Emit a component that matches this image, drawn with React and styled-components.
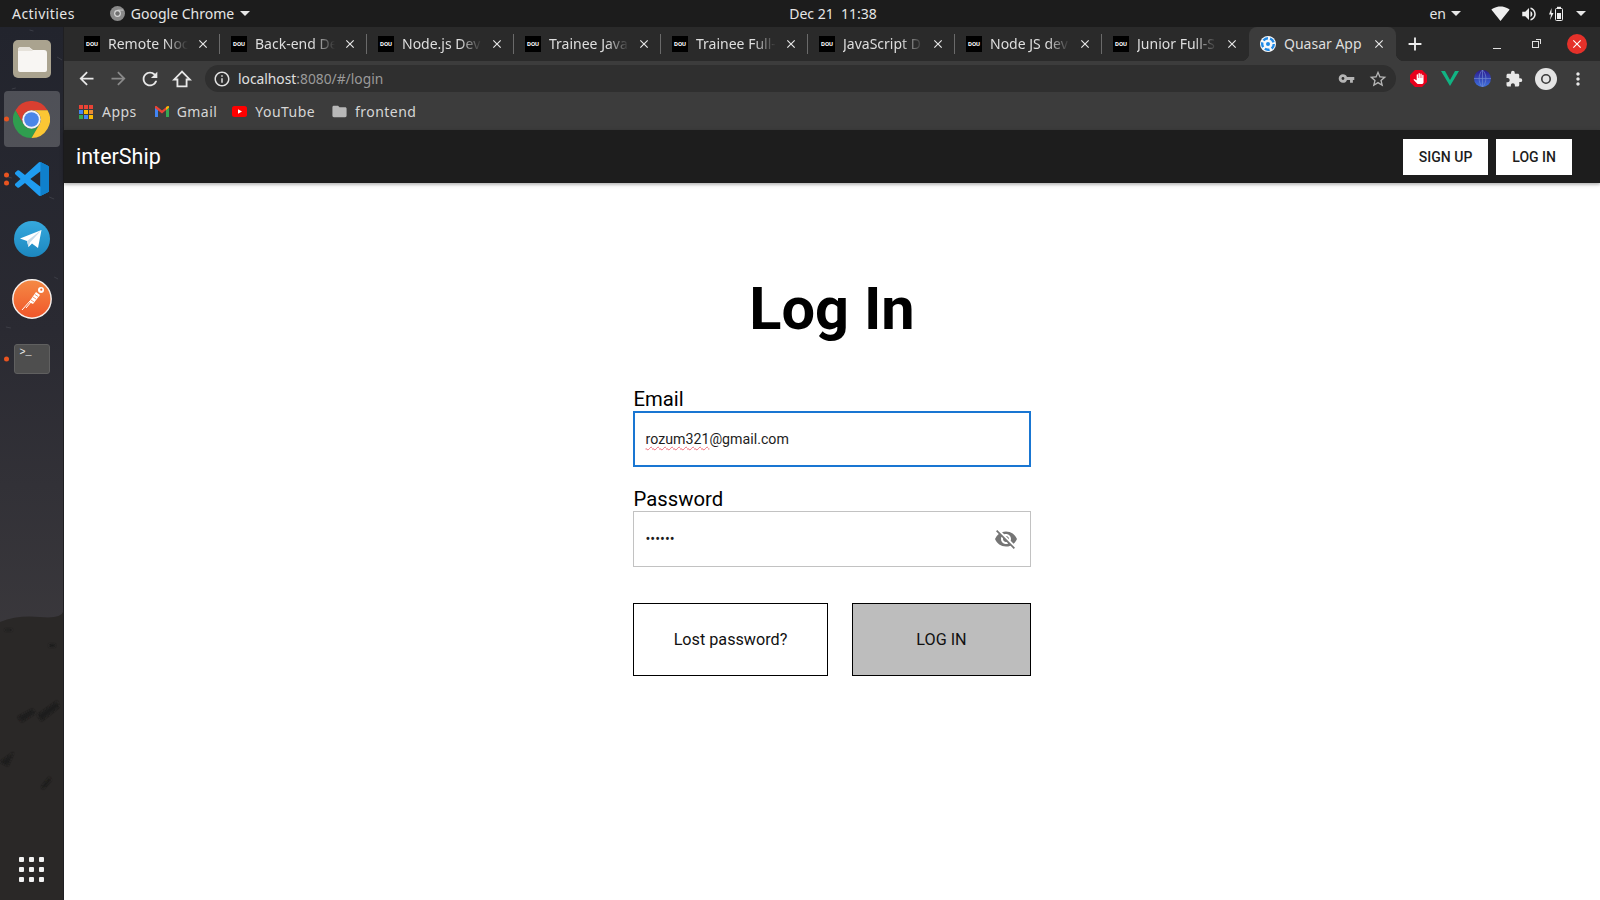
import React from 'react';
import styled, { createGlobalStyle } from 'styled-components';
import {
  MdArrowBack,
  MdArrowForward,
  MdRefresh,
  MdInfoOutline,
  MdVpnKey,
  MdStarBorder,
  MdExtension,
  MdMoreVert,
  MdFolder,
  MdClose,
  MdAdd,
  MdSignalWifi4Bar,
  MdVolumeUp,
  MdVisibilityOff,
  MdPanTool,
} from 'react-icons/md';

const uiFont = '"Noto Sans", "Open Sans", sans-serif';
const appFont = 'Roboto, "Liberation Sans", sans-serif';

const GlobalStyle = createGlobalStyle`
  html, body {
    margin: 0;
    height: 100%;
    overflow: hidden;
    background: #fff;
  }
  #root {
    height: 100%;
  }
`;

const Screen = styled.div`
  width: 1600px;
  height: 900px;
  display: flex;
  flex-direction: column;
  overflow: hidden;
`;

/* gnome top bar */
const TopBar = styled.header`
  flex: 0 0 27px;
  display: flex;
  align-items: center;
  background: #1c1c1c;
  color: #e6e6e6;
  font: 14px ${uiFont};
`;

const TopLeft = styled.div`
  flex: 0 0 789px;
  display: flex;
  align-items: center;
  padding-left: 12px;
  box-sizing: border-box;
`;

const Activities = styled.span`
  letter-spacing: 0.45px;
`;

const ActiveApp = styled.div`
  display: flex;
  align-items: center;
  gap: 6px;
  margin-left: 35px;
`;

const Caret = styled.span`
  width: 0;
  height: 0;
  border-left: 5px solid transparent;
  border-right: 5px solid transparent;
  border-top: 5px solid #e6e6e6;
`;

const Clock = styled.div`
  width: 88px;
  white-space: pre;
  text-align: center;
`;

const TopRight = styled.div`
  margin-left: auto;
  display: flex;
  align-items: center;
  padding-right: 14px;
  font-size: 14px;
  svg {
    display: block;
  }
`;

const Lang = styled.div`
  display: flex;
  align-items: center;
  gap: 5px;
  margin-right: 30px;
`;

const Tray = styled.div`
  display: flex;
  align-items: center;
  gap: 10px;
  margin-right: 12px;
  color: #eee;
`;

const Desktop = styled.div`
  flex: 1;
  display: flex;
  min-height: 0;
`;

/* ubuntu dock */
const Dock = styled.nav`
  position: relative;
  flex: 0 0 64px;
  display: flex;
  flex-direction: column;
  align-items: center;
  padding: 2px 0 18px;
  box-sizing: border-box;
  border-right: 1px solid #1f1f22;
  overflow: hidden;
`;

const Wallpaper = styled.svg`
  position: absolute;
  inset: 0;
  width: 100%;
  height: 100%;
`;

const DockSlot = styled.div`
  position: relative;
  width: 56px;
  height: 60px;
  display: flex;
  align-items: center;
  justify-content: center;
  &::before {
    content: '';
    position: absolute;
    inset: 2px 0;
    border-radius: 4px;
    background: ${(p) => (p.$active ? 'rgba(255,255,255,.2)' : 'transparent')};
  }
  > svg,
  > div {
    position: relative;
  }
`;

const RunDots = styled.div`
  position: absolute !important;
  left: 0;
  top: 50%;
  transform: translate(0, -50%);
  display: flex;
  flex-direction: column;
  gap: 3px;
`;

const RunDot = styled.span`
  width: 5px;
  height: 5px;
  border-radius: 50%;
  background: #e95420;
`;

const ShowApps = styled.div`
  position: relative;
  margin-top: auto;
  display: grid;
  grid-template-columns: repeat(3, 5px);
  gap: 5px;
`;

const ShowAppsDot = styled.span`
  width: 5px;
  height: 5px;
  border-radius: 1px;
  background: #f1f1f1;
`;

const TerminalIcon = styled.div`
  width: 36px;
  height: 30px;
  box-sizing: border-box;
  padding: 2px 0 0 5px;
  border-radius: 3px;
  background: #4e4e4e;
  border: 1px solid #606060;
  color: #eee;
  font: 10px/12px "Liberation Mono", monospace;
`;

/* browser window */
const Browser = styled.div`
  flex: 1;
  min-width: 0;
  display: flex;
  flex-direction: column;
`;

const TabStrip = styled.div`
  flex: 0 0 34px;
  display: flex;
  align-items: stretch;
  padding-left: 9px;
  background: #2a2a2a;
  color: #dedede;
  font: 14px ${uiFont};
`;

const Tab = styled.div`
  position: relative;
  flex: 0 0 147px;
  min-width: 0;
  display: flex;
  align-items: center;
  gap: 8px;
  padding: 0 10px 1px 11px;
  box-sizing: border-box;
  border-radius: 8px 8px 0 0;
  background: ${(p) => (p.$active ? '#3c3c3c' : 'transparent')};

  ${(p) =>
    p.$divider &&
    `&::after {
      content: '';
      position: absolute;
      right: 0;
      top: 7px;
      height: 20px;
      width: 1px;
      background: #6a6a6a;
    }`}

  ${(p) =>
    p.$active &&
    `&::before {
      content: '';
      position: absolute;
      left: -8px;
      right: -8px;
      bottom: 0;
      height: 8px;
      z-index: 0;
      background:
        radial-gradient(circle at 0 0, transparent 8px, #3c3c3c 8.5px) left bottom / 8px 8px no-repeat,
        radial-gradient(circle at 100% 0, transparent 8px, #3c3c3c 8.5px) right bottom / 8px 8px no-repeat;
    }`}
`;

const DouIcon = styled.span`
  flex: 0 0 16px;
  height: 16px;
  background: #000;
  color: #fff;
  font: 700 6px/16px ${appFont};
  text-align: center;
`;

const TabTitle = styled.span`
  position: relative;
  flex: 1;
  min-width: 0;
  overflow: hidden;
  white-space: nowrap;
  -webkit-mask-image: ${(p) =>
    p.$fade ? 'linear-gradient(to right, #000 72%, transparent 100%)' : 'none'};
`;

const TabClose = styled(MdClose)`
  position: relative;
  flex: 0 0 14px;
  width: 14px;
  height: 14px;
  color: #e8e8e8;
`;

const WindowControls = styled.div`
  flex: 1;
  display: flex;
  align-items: center;
  color: #eee;
`;

const NewTab = styled(MdAdd)`
  width: 22px;
  height: 22px;
  margin-left: 8px;
`;

const Minimize = styled.span`
  width: 8px;
  height: 1px;
  margin: 9px 0 0 67px;
  background: #e0e0e0;
`;

const Restore = styled.span`
  position: relative;
  width: 5px;
  height: 5px;
  margin: 1px 0 0 31px;
  border: 1px solid #e0e0e0;
  &::after {
    content: '';
    position: absolute;
    top: -3px;
    right: -3px;
    width: 4px;
    height: 4px;
    border-top: 1px solid #e0e0e0;
    border-right: 1px solid #e0e0e0;
  }
`;

const CloseWindow = styled.span`
  width: 20px;
  height: 20px;
  margin-left: 28px;
  border-radius: 50%;
  background: #e5312a;
  display: flex;
  align-items: center;
  justify-content: center;
  color: #fff;
`;

const Toolbar = styled.div`
  flex: 0 0 35px;
  display: flex;
  align-items: flex-start;
  padding: 4px 6px 0;
  box-sizing: border-box;
  background: #3c3c3c;
`;

const IconSlot = styled.span`
  flex: 0 0 32px;
  height: 27px;
  display: flex;
  align-items: center;
  justify-content: center;
  color: ${(p) => p.$color || '#e8e8e8'};
  svg {
    display: block;
  }
`;

const Omnibox = styled.div`
  flex: 1;
  height: 27px;
  margin: 0 6px 0 7px;
  padding: 0 2px 0 8px;
  display: flex;
  align-items: center;
  border-radius: 14px;
  background: #2f2f2f;
  color: #e0e0e0;
  font: 13.8px ${uiFont};
`;

const UrlText = styled.div`
  flex: 1;
  margin-left: 7px;
  span {
    color: #9a9a9a;
  }
`;

const Bookmarks = styled.div`
  flex: 0 0 34px;
  display: flex;
  align-items: center;
  gap: 17px;
  padding: 0 0 3px 15px;
  box-sizing: border-box;
  background: #3c3c3c;
  color: #d6d6d6;
  font: 14px ${uiFont};
  letter-spacing: 0.45px;
`;

const Bookmark = styled.div`
  display: flex;
  align-items: center;
  gap: ${(p) => p.$gap || 8}px;
  margin-right: ${(p) => p.$after || 0}px;
  svg {
    display: block;
  }
`;

const FolderGlyph = styled(MdFolder)`
  width: 17px;
  height: 17px;
  margin: 0 -1px;
  color: #b8b8b8;
`;

const AppsGrid = styled.span`
  display: grid;
  grid-template-columns: repeat(3, 4px);
  gap: 1px;
`;

const AppsCell = styled.span`
  width: 4px;
  height: 4px;
  background: ${(p) => p.$color};
`;

/* the page itself */
const Page = styled.div`
  flex: 1;
  display: flex;
  flex-direction: column;
  min-height: 0;
  background: #fff;
  font-family: ${appFont};
`;

const AppHeader = styled.div`
  position: relative;
  flex: 0 0 53px;
  display: flex;
  align-items: center;
  gap: 8px;
  padding: 0 28px 0 12px;
  background: #1d1d1d;
  box-shadow: 0 1px 5px rgba(0, 0, 0, 0.2), 0 2px 2px rgba(0, 0, 0, 0.14);
`;

const Brand = styled.div`
  margin-right: auto;
  color: #fff;
  font-size: 21.5px;
`;

const HeaderButton = styled.button`
  height: 36px;
  padding: 0 16px;
  border: 0;
  background: #fff;
  color: #1d1d1d;
  font: 500 14px ${appFont};
  text-transform: uppercase;
`;

const LoginMain = styled.main`
  flex: 1;
  display: flex;
  flex-direction: column;
  align-items: center;
  padding-top: 90px;
`;

const Title = styled.h1`
  margin: 0 0 42px;
  font: 700 59.5px/72px ${appFont};
  color: #000;
`;

const Form = styled.form`
  width: 398px;
  display: flex;
  flex-direction: column;
`;

const FieldLabel = styled.label`
  display: block;
  padding-left: 0.5px;
  font-size: 20.3px;
  line-height: 24px;
  color: #000;
  margin-top: ${(p) => (p.$first ? 0 : '20px')};
`;

const Field = styled.div`
  height: 56px;
  display: flex;
  align-items: center;
  box-sizing: border-box;
  padding: 0 12px 0 ${(p) => (p.$focused ? '10.5px' : '11.5px')};
  border: ${(p) => (p.$focused ? '2px solid #1976d2' : '1px solid #c2c2c2')};
  font-size: 14.2px;
  color: #1d1d1d;
`;

const Misspelled = styled.span`
  text-decoration: underline wavy #ef6a78 1px;
  text-underline-offset: 2px;
`;

const PasswordInput = styled.input`
  flex: 1;
  min-width: 0;
  padding: 0;
  border: 0;
  outline: 0;
  background: transparent;
  color: #1d1d1d;
  font: 14.4px ${appFont};
`;

const Eye = styled(MdVisibilityOff)`
  width: 24px;
  height: 24px;
  color: #757575;
`;

const Actions = styled.div`
  display: flex;
  gap: 24px;
  margin-top: 36px;
`;

const ActionButton = styled.button`
  width: ${(p) => p.$width}px;
  height: 73px;
  box-sizing: border-box;
  border: 1px solid #000;
  background: ${(p) => (p.$primary ? '#bdbdbd' : '#fff')};
  color: #111;
  font: 16.2px ${appFont};
`;

const tabs = [
  'Remote Noc',
  'Back-end De',
  'Node.js Dev',
  'Trainee Java',
  'Trainee Full-',
  'JavaScript D',
  'Node JS dev',
  'Junior Full-S',
];

const appsColors = [
  '#ea4335', '#ea4335', '#ea4335',
  '#4285f4', '#fbbc04', '#ea8a35',
  '#34a853', '#4285f4', '#fbbc04',
];

const ChromeLogo = ({ size = 37 }) => (
  <svg width={size} height={size} viewBox="0 0 48 48">
    <path d="M3.2 12A24 24 0 0 1 44.8 12H24A12 12 0 0 0 13.6 30z" fill="#d93f30" />
    <path d="M3.2 12A24 24 0 0 0 24 48L34.4 30A12 12 0 0 1 13.6 30z" fill="#2f9e4f" />
    <path d="M44.8 12H24A12 12 0 0 1 34.4 30L24 48A24 24 0 0 0 44.8 12z" fill="#fbc634" />
    <circle cx="24" cy="24" r="12" fill="#f4f4f4" />
    <circle cx="24" cy="24" r="9.5" fill="#4a86e8" />
  </svg>
);

const GreyChrome = () => (
  <svg width="15" height="15" viewBox="0 0 15 15">
    <circle cx="7.5" cy="7.5" r="7.5" fill="#8a8a8a" />
    <circle cx="7.5" cy="7.5" r="3.4" fill="#d8d8d8" />
    <circle cx="7.5" cy="7.5" r="2.2" fill="#6f6f6f" />
    <path d="M7.5 4.1h6" stroke="#d8d8d8" strokeWidth="0.8" />
  </svg>
);

const FilesIcon = () => (
  <svg width="38" height="38" viewBox="0 0 38 38">
    <rect width="38" height="38" rx="5" fill="#aaa38f" />
    <path
      d="M5 10a3 3 0 0 1 3-3h8l4 3h11a3 3 0 0 1 3 3v17a2 2 0 0 1-2 2H7a2 2 0 0 1-2-2z"
      fill="#f8f6f3"
    />
    <path d="M5 11h15l-4-4H8a3 3 0 0 0-3 3z" fill="#e6e2da" />
  </svg>
);

const VsCodeIcon = () => (
  <svg width="34" height="34" viewBox="0 0 24 24">
    <path
      d="M23.15 2.587L18.21.21a1.494 1.494 0 0 0-1.705.29l-9.46 8.63-4.12-3.128a.999.999 0 0 0-1.276.057L.327 7.261A1 1 0 0 0 .326 8.74L3.899 12 .326 15.26a1 1 0 0 0 .001 1.479L1.65 17.94a.999.999 0 0 0 1.276.057l4.12-3.128 9.46 8.63a1.492 1.492 0 0 0 1.704.29l4.942-2.377A1.5 1.5 0 0 0 24 20.06V3.939a1.5 1.5 0 0 0-.85-1.352zm-5.146 14.861L10.826 12l7.178-5.448v10.896z"
      fill="#1f9cf0"
    />
    <path d="M18 0l5.2 2.6A1.5 1.5 0 0 1 24 4v16a1.5 1.5 0 0 1-.8 1.4L18 24z" fill="#0f80cc" />
  </svg>
);

const TelegramIcon = () => (
  <svg width="36" height="36" viewBox="0 0 36 36">
    <defs>
      <linearGradient id="tg" x1="0" y1="0" x2="0" y2="1">
        <stop offset="0" stopColor="#36a9de" />
        <stop offset="1" stopColor="#1c87bf" />
      </linearGradient>
    </defs>
    <circle cx="18" cy="18" r="18" fill="url(#tg)" />
    <path d="M6 17.5L27.5 9 24 27l-6-4.5-3.5 3.5-1.5-6z" fill="#fff" />
    <path d="M13 20l14.5-11L16 21.5l-1.5 4.5z" fill="#c8dcea" />
  </svg>
);

const PostmanIcon = () => (
  <svg width="40" height="40" viewBox="0 0 40 40">
    <defs>
      <linearGradient id="pm" x1="0" y1="0" x2="0" y2="1">
        <stop offset="0" stopColor="#f58a45" />
        <stop offset="1" stopColor="#f0562a" />
      </linearGradient>
    </defs>
    <circle cx="20" cy="20" r="19.2" fill="url(#pm)" stroke="#f6f1ee" strokeWidth="1.4" />
    <path d="M10 31l8-9M14 29l5-6" stroke="#fff" strokeWidth="1" />
    <path d="M17 23l7-10 4 3-7 9z" fill="#fff" />
    <path d="M19 21l3 2M21 18l3 2M23 15.5l3 2" stroke="#f0682f" strokeWidth="0.7" />
    <circle cx="29" cy="11" r="3" fill="#fff" />
    <circle cx="29.3" cy="10.7" r="1.1" fill="#f0682f" />
  </svg>
);

const DockArt = () => (
  <Wallpaper viewBox="0 0 64 873" preserveAspectRatio="none">
    <defs>
      <linearGradient id="sky" x1="0" y1="0" x2="0" y2="1">
        <stop offset="0" stopColor="#22242d" />
        <stop offset="0.35" stopColor="#2a2a32" />
        <stop offset="0.7" stopColor="#3a383c" />
      </linearGradient>
      <filter id="soft">
        <feGaussianBlur stdDeviation="1" />
      </filter>
    </defs>
    <rect width="64" height="873" fill="url(#sky)" />
    <path d="M0 595Q18 588 40 590T64 585V873H0z" fill="#2a2827" />
    <g fill="#1d1c1b" filter="url(#soft)">
      <path d="M18 690l15-8 3 4-14 9zM50 617h6v3h-6zM5 602h7v2H5zM38 688l20-14 2 6-18 14zM0 735l14-10-6 14zM42 760l8-10 2 3-8 9z" />
    </g>
    <g stroke="#4a4c55" strokeWidth="0.6">
      <path d="M30 3l4 1M58 30l5 3M12 62l4-1M20 100l6 2M8 150l4 1M50 170l5 2M24 215l5-1M55 250l4 2M6 300l5 1M34 340l4 2" />
    </g>
  </Wallpaper>
);

const HomeIcon = () => (
  <svg width="22" height="22" viewBox="0 0 24 24">
    <path d="M12 4L3.5 12.5H7V20h10v-7.5h3.5z" fill="none" stroke="currentColor" strokeWidth="2" strokeLinejoin="miter" />
  </svg>
);

const GmailIcon = () => (
  <svg width="14" height="11" viewBox="0 0 14 11">
    <path d="M0 1.5V11h3V4z" fill="#4285f4" />
    <path d="M14 1.5V11h-3V4z" fill="#34a853" />
    <path d="M0 1.5A1 1 0 0 1 2 .5L7 4.5 12 .5l2 .2v.8L7 7.5 0 2z" fill="#ea4335" />
    <path d="M11 .9L13 0a1 1 0 0 1 1 1.5L11 4z" fill="#fbbc04" />
  </svg>
);

const YoutubeIcon = () => (
  <svg width="15" height="11" viewBox="0 0 15 11">
    <rect width="15" height="11" rx="2.5" fill="#f00" />
    <path d="M6 3.2L10 5.5 6 7.8z" fill="#fff" />
  </svg>
);

const QuasarIcon = () => (
  <svg width="16" height="16" viewBox="0 0 16 16">
    <circle cx="8" cy="8" r="8" fill="#f5f7fa" />
    <circle cx="8" cy="8" r="5.8" fill="none" stroke="#1e88e5" strokeWidth="2.4" strokeDasharray="5 2.2" />
    <circle cx="8" cy="8" r="2" fill="#1e88e5" />
  </svg>
);

const AdblockIcon = () => (
  <svg width="17" height="17" viewBox="0 0 17 17">
    <path d="M5 0h7l5 5v7l-5 5H5l-5-5V5z" fill="#e8001c" />
  </svg>
);

const AdblockBadge = styled.span`
  position: relative;
  width: 17px;
  height: 17px;
  svg + svg {
    position: absolute;
    left: 3px;
    top: 3px;
    color: #fff;
  }
`;

const VueIcon = () => (
  <svg width="18" height="15" viewBox="0 0 18 15">
    <path d="M0 0h4l5 9 5-9h4L9 15z" fill="#11b383" />
  </svg>
);

const GlobeIcon = () => (
  <svg width="17" height="17" viewBox="0 0 17 17">
    <defs>
      <linearGradient id="gl" x1="0" y1="0" x2="0" y2="1">
        <stop offset="0" stopColor="#2b1a8c" />
        <stop offset="1" stopColor="#3f73e0" />
      </linearGradient>
    </defs>
    <circle cx="8.5" cy="8.5" r="8.5" fill="url(#gl)" />
    <path d="M0 8.5h17M8.5 0v17M8.5 0C4 4 4 13 8.5 17M8.5 0C13 4 13 13 8.5 17" fill="none" stroke="#6f86d0" strokeWidth="0.7" />
  </svg>
);

const AvatarIcon = () => (
  <svg width="22" height="22" viewBox="0 0 22 22">
    <circle cx="11" cy="11" r="11" fill="#e4e4e4" />
    <circle cx="11" cy="11" r="4.2" fill="none" stroke="#3a3a3a" strokeWidth="1.6" />
  </svg>
);

const BatteryIcon = () => (
  <svg width="16" height="16" viewBox="0 0 16 16">
    <path d="M3.5 2L1 8.5h2L2 14l3.5-7h-2z" fill="#eee" />
    <rect x="7.5" y="2.5" width="7" height="12" rx="1" fill="none" stroke="#eee" />
    <rect x="9" y="0.8" width="4" height="1.7" fill="#eee" />
    <rect x="9" y="7" width="4" height="6" fill="#eee" />
  </svg>
);

const dockItems = [
  { icon: <FilesIcon />, dots: 0 },
  { icon: <ChromeLogo />, dots: 1, active: true },
  { icon: <VsCodeIcon />, dots: 2 },
  { icon: <TelegramIcon />, dots: 0 },
  { icon: <PostmanIcon />, dots: 0 },
  { icon: <TerminalIcon>{'>_'}</TerminalIcon>, dots: 1 },
];

const App = () => (
  <Screen>
    <GlobalStyle />
    <TopBar>
      <TopLeft>
        <Activities>Activities</Activities>
        <ActiveApp>
          <GreyChrome />
          <span>Google Chrome</span>
          <Caret />
        </ActiveApp>
      </TopLeft>
      <Clock>{'Dec 21  11:38'}</Clock>
      <TopRight>
        <Lang>
          <span>en</span>
          <Caret />
        </Lang>
        <Tray>
          <MdSignalWifi4Bar size={19} />
          <MdVolumeUp size={18} />
          <BatteryIcon />
        </Tray>
        <Caret />
      </TopRight>
    </TopBar>
    <Desktop>
      <Dock>
        <DockArt />
        {dockItems.map((item, i) => (
          <DockSlot key={i} $active={item.active}>
            {item.icon}
            {item.dots > 0 && (
              <RunDots>
                {Array.from({ length: item.dots }).map((_, d) => (
                  <RunDot key={d} />
                ))}
              </RunDots>
            )}
          </DockSlot>
        ))}
        <ShowApps>
          {Array.from({ length: 9 }).map((_, i) => (
            <ShowAppsDot key={i} />
          ))}
        </ShowApps>
      </Dock>
      <Browser>
        <TabStrip>
          {tabs.map((title, i) => (
            <Tab key={title} $divider={i < tabs.length - 1}>
              <DouIcon>DOU</DouIcon>
              <TabTitle $fade>{title}</TabTitle>
              <TabClose />
            </Tab>
          ))}
          <Tab $active>
            <QuasarIcon />
            <TabTitle>Quasar App</TabTitle>
            <TabClose />
          </Tab>
          <WindowControls>
            <NewTab />
            <Minimize />
            <Restore />
            <CloseWindow>
              <MdClose size={14} />
            </CloseWindow>
          </WindowControls>
        </TabStrip>
        <Toolbar>
          <IconSlot><MdArrowBack size={21} /></IconSlot>
          <IconSlot $color="#8a8a8a"><MdArrowForward size={21} /></IconSlot>
          <IconSlot><MdRefresh size={22} /></IconSlot>
          <IconSlot><HomeIcon /></IconSlot>
          <Omnibox>
            <MdInfoOutline size={18} />
            <UrlText>
              localhost<span>:8080/#/login</span>
            </UrlText>
            <IconSlot $color="#b5b5b5"><MdVpnKey size={17} /></IconSlot>
            <IconSlot $color="#b5b5b5"><MdStarBorder size={20} /></IconSlot>
          </Omnibox>
          <IconSlot>
            <AdblockBadge>
              <AdblockIcon />
              <MdPanTool size={11} />
            </AdblockBadge>
          </IconSlot>
          <IconSlot><VueIcon /></IconSlot>
          <IconSlot><GlobeIcon /></IconSlot>
          <IconSlot><MdExtension size={18} /></IconSlot>
          <IconSlot><AvatarIcon /></IconSlot>
          <IconSlot><MdMoreVert size={20} /></IconSlot>
        </Toolbar>
        <Bookmarks>
          <Bookmark $gap={9} $after={1}>
            <AppsGrid>
              {appsColors.map((c, i) => (
                <AppsCell key={i} $color={c} />
              ))}
            </AppsGrid>
            Apps
          </Bookmark>
          <Bookmark $after={-2}><GmailIcon />Gmail</Bookmark>
          <Bookmark><YoutubeIcon />YouTube</Bookmark>
          <Bookmark><FolderGlyph />frontend</Bookmark>
        </Bookmarks>
        <Page>
          <AppHeader>
            <Brand>interShip</Brand>
            <HeaderButton>Sign up</HeaderButton>
            <HeaderButton>Log in</HeaderButton>
          </AppHeader>
          <LoginMain>
            <Title>Log In</Title>
            <Form onSubmit={(e) => e.preventDefault()}>
              <FieldLabel $first>Email</FieldLabel>
              <Field $focused>
                <span><Misspelled>rozum321</Misspelled>@gmail.com</span>
              </Field>
              <FieldLabel>Password</FieldLabel>
              <Field>
                <PasswordInput type="password" value="123456" readOnly />
                <Eye />
              </Field>
              <Actions>
                <ActionButton type="button" $width={195}>Lost password?</ActionButton>
                <ActionButton type="submit" $width={179} $primary>LOG IN</ActionButton>
              </Actions>
            </Form>
          </LoginMain>
        </Page>
      </Browser>
    </Desktop>
  </Screen>
);

export default App;
